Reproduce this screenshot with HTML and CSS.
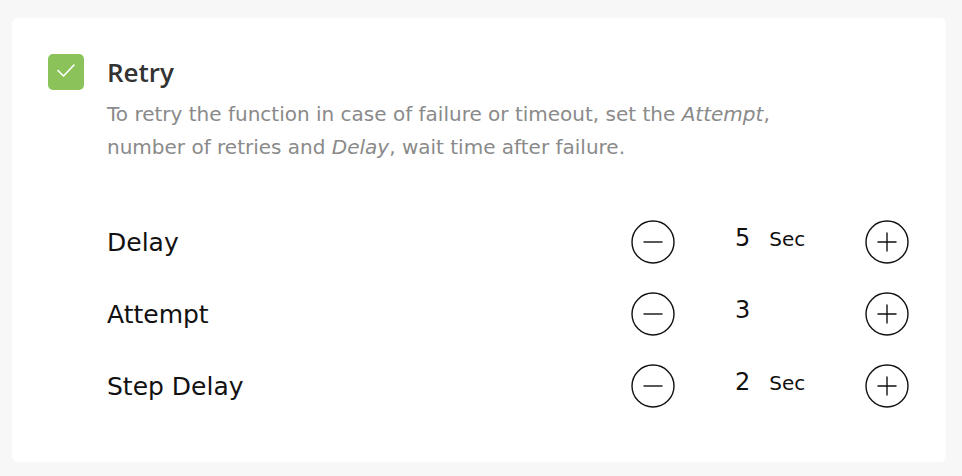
FILE: index.html
```html
<!DOCTYPE html>
<html lang="en">
<head>
  <meta charset="UTF-8" />
  <title>Retry settings</title>
  <link rel="stylesheet" href="styles.css">
</head>
<body>

  <div class="card">

    <!-- HEADER -->
    <div class="header">
      <span class="checkbox">
        <svg width="36" height="36" viewBox="0 0 36 36">
          <path d="M10 16.5 L15.5 22 L26 11" fill="none" stroke="#fff" stroke-width="1.6" stroke-linecap="round" stroke-linejoin="round"/>
        </svg>
      </span>
      <div class="header-text">
        <h2 class="title">Retry</h2>
        <p class="desc">To retry the function in case of failure or timeout, set the <em>Attempt</em>,<br>number of retries and <em>Delay</em>, wait time after failure.</p>
      </div>
    </div>

    <!-- ROWS -->
    <div class="rows">
      <div class="row">
        <span class="label">Delay</span>
        <div class="stepper">
          <button class="step-btn" aria-label="minus">
            <svg width="44" height="44" viewBox="0 0 44 44"><circle cx="22" cy="22" r="21" fill="none" stroke="#111" stroke-width="1.4"/><path d="M12.5 22 H31.5" stroke="#111" stroke-width="1.4"/></svg>
          </button>
          <div class="value"><span class="num">5</span><span class="unit">Sec</span></div>
          <button class="step-btn" aria-label="plus">
            <svg width="44" height="44" viewBox="0 0 44 44"><circle cx="22" cy="22" r="21" fill="none" stroke="#111" stroke-width="1.4"/><path d="M12.5 22 H31.5 M22 12.5 V31.5" stroke="#111" stroke-width="1.4"/></svg>
          </button>
        </div>
      </div>

      <div class="row">
        <span class="label">Attempt</span>
        <div class="stepper">
          <button class="step-btn" aria-label="minus">
            <svg width="44" height="44" viewBox="0 0 44 44"><circle cx="22" cy="22" r="21" fill="none" stroke="#111" stroke-width="1.4"/><path d="M12.5 22 H31.5" stroke="#111" stroke-width="1.4"/></svg>
          </button>
          <div class="value"><span class="num">3</span></div>
          <button class="step-btn" aria-label="plus">
            <svg width="44" height="44" viewBox="0 0 44 44"><circle cx="22" cy="22" r="21" fill="none" stroke="#111" stroke-width="1.4"/><path d="M12.5 22 H31.5 M22 12.5 V31.5" stroke="#111" stroke-width="1.4"/></svg>
          </button>
        </div>
      </div>

      <div class="row">
        <span class="label">Step Delay</span>
        <div class="stepper">
          <button class="step-btn" aria-label="minus">
            <svg width="44" height="44" viewBox="0 0 44 44"><circle cx="22" cy="22" r="21" fill="none" stroke="#111" stroke-width="1.4"/><path d="M12.5 22 H31.5" stroke="#111" stroke-width="1.4"/></svg>
          </button>
          <div class="value"><span class="num">2</span><span class="unit">Sec</span></div>
          <button class="step-btn" aria-label="plus">
            <svg width="44" height="44" viewBox="0 0 44 44"><circle cx="22" cy="22" r="21" fill="none" stroke="#111" stroke-width="1.4"/><path d="M12.5 22 H31.5 M22 12.5 V31.5" stroke="#111" stroke-width="1.4"/></svg>
          </button>
        </div>
      </div>
    </div>

  </div>

</body>
</html>
```

FILE: styles.css
```css
body {
  margin: 0;
  padding: 18px 16px 14px 12px;
  background-color: #f7f7f7;
  font-family: "DejaVu Sans", "Open Sans", sans-serif;
  color: #111;
}

.card {
  background-color: #fff;
  border-radius: 6px;
  height: 444px;
  box-sizing: border-box;
  padding: 36px 37px 0 36px;
}

/* Header */
.header {
  display: flex;
  gap: 23px;
}

.checkbox {
  flex: none;
  width: 36px;
  height: 36px;
  border-radius: 5px;
  background-color: #8bc35a;
}

.checkbox svg {
  display: block;
}

.title {
  margin: 0;
  font-family: "Open Sans", sans-serif;
  font-size: 26px;
  font-weight: 600;
  line-height: 36px;
  color: #333;
}

.desc {
  margin: 8px 0 0;
  font-size: 20px;
  line-height: 33px;
  color: #8a8a8a;
}

/* Rows */
.rows {
  margin-top: 42px;
  padding-left: 59px;
}

.row {
  display: flex;
  align-items: center;
  height: 72px;
}

.label {
  flex: 1;
  font-size: 25px;
}

.stepper {
  display: flex;
  align-items: center;
}

.step-btn {
  border: none;
  background: none;
  padding: 0;
  width: 44px;
  height: 44px;
  cursor: pointer;
}

.step-btn svg {
  display: block;
}

.value {
  width: 190px;
  box-sizing: border-box;
  padding-left: 60px;
  padding-bottom: 8px;
  display: flex;
  align-items: baseline;
  gap: 19px;
}

.num {
  font-size: 24px;
}

.unit {
  font-size: 20px;
}
```
